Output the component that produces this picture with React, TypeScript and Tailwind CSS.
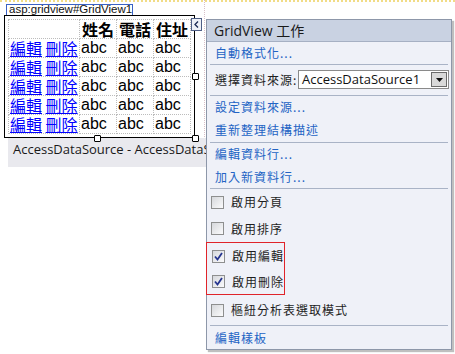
const cjk = '"Noto Sans CJK TC", "Noto Sans", sans-serif';

function Check({ checked }: { checked?: boolean }) {
  return (
    <span className="w-[13px] h-[13px] border border-[#8e8f8f] bg-gradient-to-br from-[#d6d8dc] to-[#fbfbfc] flex items-center justify-center shrink-0">
      {checked && (
        <svg width="9" height="9" viewBox="0 0 9 9">
          <path d="M1 4.5 L3.5 7.5 L8 1" fill="none" stroke="#26358f" strokeWidth="1.8" />
        </svg>
      )}
    </span>
  );
}

function LinkRow({ label, h = 'h-[23px]' }: { label: string; h?: string }) {
  return (
    <div className={`${h} flex items-center pl-[8px] text-[12px] text-[#2263c4] tracking-[1px]`}>{label}</div>
  );
}

function CheckRow({ label, checked, h = 'h-[26px]' }: { label: string; checked?: boolean; h?: string }) {
  return (
    <div className={`${h} flex items-center pl-[4px] gap-[7px] text-[12px] text-[#1e1e1e] tracking-[1px]`}>
      <Check checked={checked} />
      <span>{label}</span>
    </div>
  );
}

const Sep = () => <div className="h-px mx-[3px] bg-[#a9b3c6]" />;

const Handle = ({ cls }: { cls: string }) => (
  <span className={`absolute w-[7px] h-[7px] bg-white border border-black rounded-[1px] ${cls}`} />
);

export default function App() {
  const rows = [0, 1, 2, 3, 4];
  return (
    <div className="relative w-[455px] h-[354px] bg-white overflow-hidden" style={{ fontFamily: cjk }}>
      {/* design surface */}
      <div className="h-[3px] border-t-2 border-dotted border-[#f1dc86]" />
      <div className="relative w-[205px] border-r border-dotted border-[#d8c0c8] h-[167px] mt-[-3px] pt-[3px]">
        <div className="ml-[6px] mt-[1px] w-[127px] h-[11px] border border-b-0 border-[#3a62c6] bg-white flex items-center pl-[2px] text-[11.5px] leading-none text-[#111]" style={{ fontFamily: '"Liberation Sans", Arial, sans-serif' }}>
          asp:gridview#GridView1
        </div>
        <div className="relative ml-[4px] w-[191px] h-[123px] border border-black pl-[3px] pt-[3px]">
          <table className="border-collapse table-fixed w-[182px] text-[16px] leading-none" style={{ fontFamily: '"Liberation Sans", "Noto Sans CJK TC", sans-serif' }}>
            <colgroup>
              <col className="w-[71px]" />
              <col className="w-[37px]" />
              <col className="w-[37px]" />
              <col className="w-[37px]" />
            </colgroup>
            <tbody>
              <tr className="h-[19px]">
                <td className="border border-dotted border-[#bcbcbc]" />
                {['姓名', '電話', '住址'].map((t) => (
                  <td key={t} className="border border-dotted border-[#bcbcbc] font-bold text-center p-0" style={{ fontFamily: cjk }}>{t}</td>
                ))}
              </tr>
              {rows.map((r) => (
                <tr key={r} className="h-[19px]">
                  <td className="border border-dotted border-[#bcbcbc] p-0 pl-[1px] whitespace-nowrap text-[#0000ff]" style={{ fontFamily: cjk }}>
                    <span className="underline">編輯</span> <span className="underline">刪除</span>
                  </td>
                  {[0, 1, 2].map((c) => (
                    <td key={c} className="border border-dotted border-[#bcbcbc] p-0 pl-[1px]">abc</td>
                  ))}
                </tr>
              ))}
            </tbody>
          </table>
          <Handle cls="right-[-5px] top-[57px]" />
          <Handle cls="left-[89px] bottom-[-5px]" />
          <Handle cls="right-[-5px] bottom-[-5px]" />
          <span className="absolute right-[-8px] top-[2px] w-[11px] h-[13px] border border-[#4f5f86] bg-[#eef1f7] flex items-center justify-center">
            <svg width="5" height="7" viewBox="0 0 5 7">
              <path d="M4 0.5 L1 3.5 L4 6.5" fill="none" stroke="#1b2a55" strokeWidth="1.3" />
            </svg>
          </span>
        </div>
        <div className="ml-[8px] w-[220px] h-[29px] bg-[#e9e9ee] pl-[5px] pt-[2px] text-[13px] text-[#1a1a1a] whitespace-nowrap" style={{ fontFamily: '"Open Sans", "Noto Sans", sans-serif' }}>
          AccessDataSource - AccessDataSource1
        </div>
      </div>

      {/* smart tag panel */}
      <div className="absolute left-[206px] top-[19px] w-[246px] h-[331px] border border-[#8d97a9] bg-[#eff1f8] shadow-[2px_2px_1px_rgba(0,0,0,0.25)] flex flex-col">
        <div className="h-[22px] bg-[#c9d2e2] border-b border-[#a6b0c3] flex items-center pl-[7px] text-[14px] text-[#1a1a1a]" style={{ fontFamily: '"Open Sans", "Noto Sans CJK TC", sans-serif' }}>
          GridView 工作
        </div>
        <LinkRow label="自動格式化..." h="h-[22px]" />
        <Sep />
        <div className="h-[30px] flex items-center pl-[8px] text-[12px] text-[#1e1e1e] tracking-[1px]">
          <span>選擇資料來源:</span>
          <div className="ml-auto mr-[2px] w-[151px] h-[19px] border border-[#8a8a8a] bg-white flex items-center pl-[3px] tracking-normal" style={{ fontFamily: '"Open Sans", "Noto Sans", sans-serif' }}>
            <span className="text-[13px] text-[#111]">AccessDataSource1</span>
            <span className="ml-auto mr-[1px] w-[16px] h-[15px] border border-[#6b6b6b] bg-[#d9d9d9] flex items-center justify-center">
              <svg width="7" height="4" viewBox="0 0 7 4"><path d="M0 0 H7 L3.5 4 Z" fill="#111" /></svg>
            </span>
          </div>
        </div>
        <Sep />
        <LinkRow label="設定資料來源..." />
        <LinkRow label="重新整理結構描述" />
        <Sep />
        <LinkRow label="編輯資料行..." />
        <LinkRow label="加入新資料行..." />
        <Sep />
        <CheckRow label="啟用分頁" />
        <CheckRow label="啟用排序" h="h-[27px]" />
        <div className="w-[79px] h-[53px] ml-[-1px] border border-[#e0242a] flex flex-col">
          <div className="ml-[1px]"><CheckRow label="啟用編輯" checked /></div>
          <div className="ml-[1px]"><CheckRow label="啟用刪除" checked h="h-[25px]" /></div>
        </div>
        <CheckRow label="樞紐分析表選取模式" h="h-[30px]" />
        <Sep />
        <LinkRow label="編輯樣板" h="h-[23px]" />
      </div>
    </div>
  );
}
